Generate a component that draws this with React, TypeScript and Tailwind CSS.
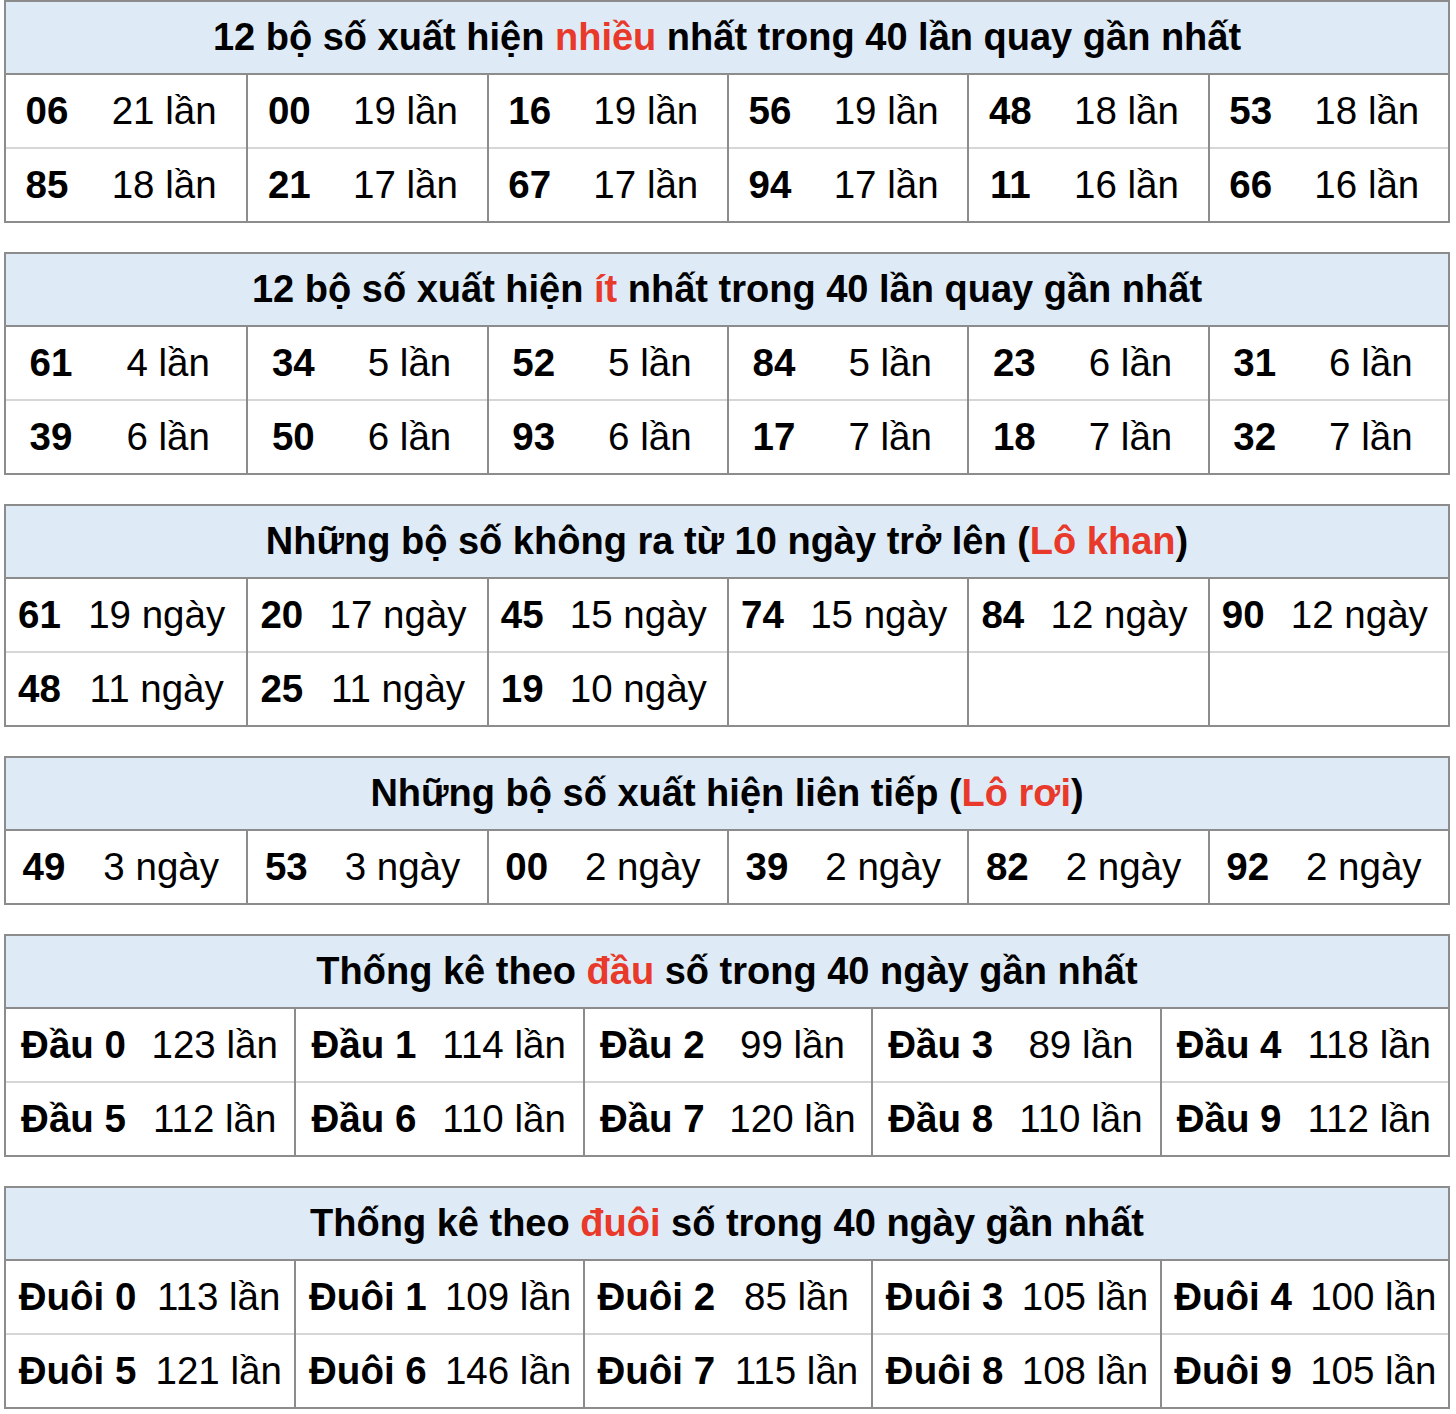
import React from "react";

type Cell = [string, string] | null;

const TABLES: { title: React.ReactNode; numW: string; cols: number; rows: Cell[][] }[] = [
  {
    title: (
      <>
        12 bộ số xuất hiện <span className="text-[#e8392a]">nhiều</span> nhất trong 40 lần quay gần nhất
      </>
    ),
    numW: "w-[82px]",
    cols: 6,
    rows: [
      [["06", "21 lần"], ["00", "19 lần"], ["16", "19 lần"], ["56", "19 lần"], ["48", "18 lần"], ["53", "18 lần"]],
      [["85", "18 lần"], ["21", "17 lần"], ["67", "17 lần"], ["94", "17 lần"], ["11", "16 lần"], ["66", "16 lần"]],
    ],
  },
  {
    title: (
      <>
        12 bộ số xuất hiện <span className="text-[#e8392a]">ít</span> nhất trong 40 lần quay gần nhất
      </>
    ),
    numW: "w-[90px]",
    cols: 6,
    rows: [
      [["61", "4 lần"], ["34", "5 lần"], ["52", "5 lần"], ["84", "5 lần"], ["23", "6 lần"], ["31", "6 lần"]],
      [["39", "6 lần"], ["50", "6 lần"], ["93", "6 lần"], ["17", "7 lần"], ["18", "7 lần"], ["32", "7 lần"]],
    ],
  },
  {
    title: (
      <>
        Những bộ số không ra từ 10 ngày trở lên (<span className="text-[#e8392a]">Lô khan</span>)
      </>
    ),
    numW: "w-[67px]",
    cols: 6,
    rows: [
      [["61", "19 ngày"], ["20", "17 ngày"], ["45", "15 ngày"], ["74", "15 ngày"], ["84", "12 ngày"], ["90", "12 ngày"]],
      [["48", "11 ngày"], ["25", "11 ngày"], ["19", "10 ngày"], null, null, null],
    ],
  },
  {
    title: (
      <>
        Những bộ số xuất hiện liên tiếp (<span className="text-[#e8392a]">Lô rơi</span>)
      </>
    ),
    numW: "w-[76px]",
    cols: 6,
    rows: [[["49", "3 ngày"], ["53", "3 ngày"], ["00", "2 ngày"], ["39", "2 ngày"], ["82", "2 ngày"], ["92", "2 ngày"]]],
  },
  {
    title: (
      <>
        Thống kê theo <span className="text-[#e8392a]">đầu</span> số trong 40 ngày gần nhất
      </>
    ),
    numW: "w-[135px]",
    cols: 5,
    rows: [
      [["Đầu 0", "123 lần"], ["Đầu 1", "114 lần"], ["Đầu 2", "99 lần"], ["Đầu 3", "89 lần"], ["Đầu 4", "118 lần"]],
      [["Đầu 5", "112 lần"], ["Đầu 6", "110 lần"], ["Đầu 7", "120 lần"], ["Đầu 8", "110 lần"], ["Đầu 9", "112 lần"]],
    ],
  },
  {
    title: (
      <>
        Thống kê theo <span className="text-[#e8392a]">đuôi</span> số trong 40 ngày gần nhất
      </>
    ),
    numW: "w-[143px]",
    cols: 5,
    rows: [
      [["Đuôi 0", "113 lần"], ["Đuôi 1", "109 lần"], ["Đuôi 2", "85 lần"], ["Đuôi 3", "105 lần"], ["Đuôi 4", "100 lần"]],
      [["Đuôi 5", "121 lần"], ["Đuôi 6", "146 lần"], ["Đuôi 7", "115 lần"], ["Đuôi 8", "108 lần"], ["Đuôi 9", "105 lần"]],
    ],
  },
];

export default function App() {
  return (
    <div className="bg-white min-h-screen px-[4px] pb-[8px] font-['Liberation_Sans',Arial,sans-serif] text-black text-[38.5px]">
      <div className="flex flex-col gap-[29px] w-[1446px]">
        {TABLES.map((t, ti) => (
          <div key={ti} className="border-2 border-[#8c8c8c]">
            {/* Header */}
            <div className="h-[73px] bg-[#deebf7] border-b-2 border-[#8c8c8c] flex items-center justify-center font-bold whitespace-nowrap text-[38px]">
              <span>{t.title}</span>
            </div>

            {/* Columns */}
            <div className={t.cols === 6 ? "grid grid-cols-6" : "grid grid-cols-5"}>
              {Array.from({ length: t.cols }).map((_, ci) => (
                <div key={ci} className={ci > 0 ? "border-l-2 border-[#8c8c8c]" : ""}>
                  {t.rows.map((row, ri) => {
                    const c = row[ci];
                    return (
                      <div
                        key={ri}
                        className={`flex items-center whitespace-nowrap ${ri > 0 ? "h-[74px] border-t-2 border-[#d6d6d6]" : "h-[72px]"}`}
                      >
                        {c && (
                          <>
                            <span className={`${t.numW} shrink-0 text-center font-bold`}>{c[0]}</span>
                            <span className="flex-1 text-center pr-[6px]">{c[1]}</span>
                          </>
                        )}
                      </div>
                    );
                  })}
                </div>
              ))}
            </div>
          </div>
        ))}
      </div>
    </div>
  );
}
